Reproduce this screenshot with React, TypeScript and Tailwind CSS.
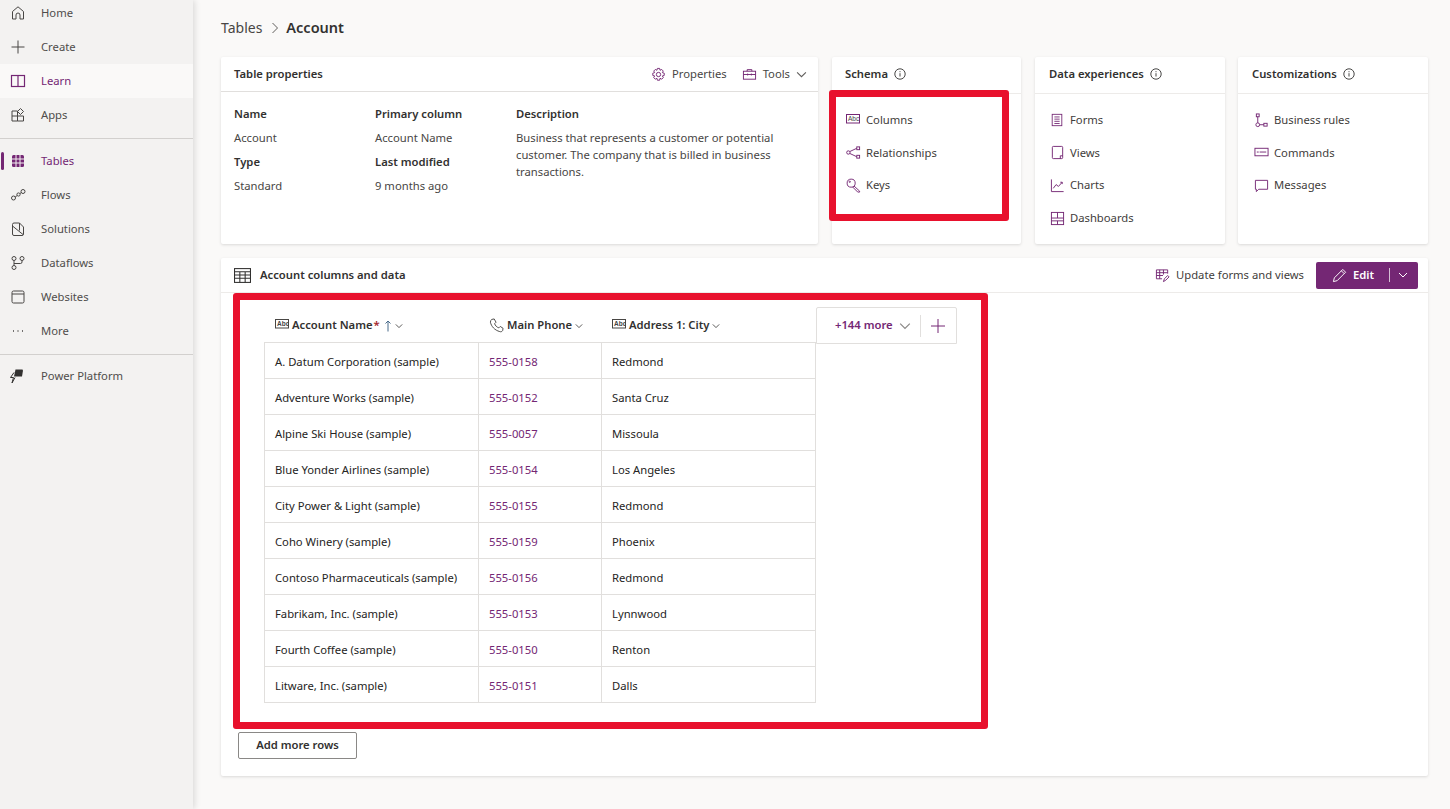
import type { ReactNode } from "react";

const Ic = ({ s = 16, c = "#605e5c", children }: { s?: number; c?: string; children: ReactNode }) => (
  <svg width={s} height={s} viewBox="0 0 16 16" fill="none" stroke={c} strokeWidth="1" className="shrink-0">
    {children}
  </svg>
);

const Chevron = ({ s = 10, c = "#605e5c" }: { s?: number; c?: string }) => (
  <svg width={s} height={s} viewBox="0 0 10 10" fill="none" stroke={c} strokeWidth="1" className="shrink-0">
    <path d="M1 3l4 4 4-4" />
  </svg>
);

const Info = () => (
  <svg width="12" height="12" viewBox="0 0 12 12" fill="none" stroke="#323130" strokeWidth="0.9" className="shrink-0">
    <circle cx="6" cy="6" r="5.2" />
    <path d="M6 5.2v3.3M6 3.2v1" />
  </svg>
);

const AbcIcon = ({ c = "#742774" }: { c?: string }) => (
  <svg width="14" height="10" viewBox="0 0 14 10" fill="none" className="mb-[3px] shrink-0">
    <rect x="0.5" y="0.5" width="13" height="8.5" stroke={c} />
    <text x="2" y="7" fontSize="6.5" fill="#444" stroke="none" fontFamily="Liberation Sans, sans-serif">Abc</text>
  </svg>
);

const navTop = [
  { label: "Home", icon: <path d="M2.5 14V6.5L8 1.8l5.500 4.700V14h-3.500V10a2 2 0 0 0-4 0v4z" /> },
  { label: "Create", icon: <path d="M8 1.5v13M1.5 8h13" /> },
  { label: "Learn", active: true, icon: <><rect x="1.5" y="2.5" width="13" height="11" strokeWidth="1.2" /><path d="M8 2.5v11" strokeWidth="1.2" /></> },
  { label: "Apps", icon: <><path d="M2 4h5.500v10H2zM2 9h11.500v5H7.500M7.500 4v5" /><path d="M10.500 1.500l3 3-3 3-3-3z" /></> },
];

const navBottom = [
  { label: "Flows", icon: <><circle cx="3.5" cy="11" r="2" /><circle cx="8.5" cy="7.500" r="1.600" /><circle cx="13" cy="4.500" r="2" /><path d="M5.200 10l2-1.500M10 6.500l1.300-.9" /></> },
  { label: "Solutions", icon: <><path d="M4 2h5.500l4 4v7a1.500 1.500 0 0 1-1.500 1.500H4A1.500 1.500 0 0 1 2.500 13V3.500A1.500 1.500 0 0 1 4 2z" /><path d="M2.500 5l10.500 8.500M9.500 2v7.500" /></> },
  { label: "Dataflows", icon: <><circle cx="4" cy="3.500" r="2" /><circle cx="12" cy="3.500" r="2" /><circle cx="4" cy="12.500" r="2" /><path d="M4 5.500v5M12 5.500v1.500a1.500 1.500 0 0 1-1.500 1.500H4" /></> },
  { label: "Websites", icon: <><rect x="2" y="2" width="12" height="12" rx="1.500" /><path d="M2 5h12" /></> },
  { label: "More", icon: <path d="M3 8h1M7.500 8h1M12 8h1" strokeWidth="1.400" /> },
];

const NavRow = ({ label, icon, active, selected }: { label: string; icon: ReactNode; active?: boolean; selected?: boolean }) => {
  const purple = active || selected;
  return (
    <div className={`relative flex h-[34px] items-center pl-[10px] ${active ? "bg-[#faf9f8]" : ""}`}>
      {selected && <div className="absolute left-[1px] top-[8px] h-[18px] w-[3px] rounded-full bg-[#742774]" />}
      <Ic c={purple ? "#742774" : "#484644"}>{icon}</Ic>
      <span className={`ml-[15px] text-[11.25px] ${purple ? "text-[#742774]" : "text-[#4f4d4b]"}`}>{label}</span>
    </div>
  );
};

const Sidebar = () => (
  <aside className="z-10 flex h-full w-[193px] shrink-0 flex-col bg-[#f3f2f1] shadow-[2px_0_6px_rgba(0,0,0,0.12)]">
    <div className="-mt-[4px]">
      {navTop.map((n) => (
        <NavRow key={n.label} {...n} />
      ))}
    </div>
    <div className="mb-[5px] mt-[6px] h-px bg-[#d2d0ce]" />
    <NavRow
      label="Tables"
      selected
      icon={
        <>
          <rect x="2" y="2" width="12" height="12" rx="1.500" fill="#742774" stroke="none" />
          <path d="M6 2v12M10 2v12M2 6h12M2 10h12" stroke="#f3f2f1" />
        </>
      }
    />
    {navBottom.map((n) => (
      <NavRow key={n.label} {...n} />
    ))}
    <div className="mb-[4px] mt-[6px] h-px bg-[#d2d0ce]" />
    <NavRow
      label="Power Platform"
      icon={
        <>
          <path d="M5.500 1.500h7l.5 1-1 6h-8z" fill="#323130" stroke="none" />
          <path d="M4 4.500L0.500 9.500h3L2 15l3-5.500" stroke="#323130" />
        </>
      }
    />
  </aside>
);

const Card = ({ title, items, width, headPad, itemPad }: { title: string; items: { label: string; icon: ReactNode }[]; width: string; headPad: string; itemPad: string }) => (
  <section className={`flex h-[187px] flex-col rounded-[2px] bg-white shadow-[0_1px_3px_rgba(0,0,0,0.13)] ${width}`}>
    <header className={`flex h-[37px] shrink-0 items-center gap-[6px] border-b border-[#edebe9] pb-[2px] text-[11.25px] font-semibold text-[#323130] ${headPad}`}>
      {title}
      <Info />
    </header>
    <ul className="flex flex-col pt-[10px]">
      {items.map((i) => (
        <li key={i.label} className={`flex h-[32.67px] items-center gap-[6px] text-[11.25px] text-[#3f3d3b] ${itemPad}`}>
          <span className="flex w-[14px] justify-center">{i.icon}</span>
          {i.label}
        </li>
      ))}
    </ul>
  </section>
);

const P = "#742774";

const schema = [
  { label: "Columns", icon: <AbcIcon /> },
  { label: "Relationships", icon: <Ic s={15} c={P}><circle cx="2.500" cy="8" r="1.800" /><rect x="11.500" y="2" width="3" height="3" /><rect x="11.500" y="11" width="3" height="3" /><path d="M4 7l7.500-3.500M4 9l7.500 3.500" /></Ic> },
  { label: "Keys", icon: <Ic s={15} c={P}><circle cx="5.500" cy="5.500" r="4.300" /><path d="M8.500 8.500l6 5.500v1h-2l-5.500-5.500" /><circle cx="4" cy="4" r=".7" /></Ic> },
];

const dataExp = [
  { label: "Forms", icon: <Ic s={14} c={P}><rect x="2.500" y="1.500" width="11" height="13" /><path d="M5 4.500h6M5 7h6M5 9.500h6M5 12h6" /></Ic> },
  { label: "Views", icon: <Ic s={15} c={P}><rect x="2.500" y="1.500" width="11" height="13" rx="1" /><path d="M11 14.500v-3h2.500" /></Ic> },
  { label: "Charts", icon: <Ic s={15} c={P}><path d="M1.500 1.500v13h13" /><path d="M3.500 11l3-4 2.500 2 4-4.500M11 4.500h2v2" /></Ic> },
  { label: "Dashboards", icon: <Ic s={15} c={P}><rect x="1.500" y="1.500" width="13" height="13" /><path d="M8 1.500v6M8 10.500v4M1.500 7.500h13M1.500 10.500h13" /></Ic> },
];

const custom = [
  { label: "Business rules", icon: <Ic s={15} c={P}><rect x="2.500" y="1" width="3" height="3" /><circle cx="4" cy="12.500" r="2" /><rect x="10.500" y="11" width="3.500" height="3" /><path d="M4 4v6.500M6 12.500h4.500" /></Ic> },
  { label: "Commands", icon: <Ic s={15} c={P}><rect x="1" y="3.500" width="14" height="8" /><path d="M3 7.500h2M6 7.500h7" /></Ic> },
  { label: "Messages", icon: <Ic s={15} c={P}><path d="M1.500 2.500h13v9.500H5L2.500 14.500v-2.500h-1z" /></Ic> },
];

const rows = [
  ["A. Datum Corporation (sample)", "555-0158", "Redmond"],
  ["Adventure Works (sample)", "555-0152", "Santa Cruz"],
  ["Alpine Ski House (sample)", "555-0057", "Missoula"],
  ["Blue Yonder Airlines (sample)", "555-0154", "Los Angeles"],
  ["City Power & Light (sample)", "555-0155", "Redmond"],
  ["Coho Winery (sample)", "555-0159", "Phoenix"],
  ["Contoso Pharmaceuticals (sample)", "555-0156", "Redmond"],
  ["Fabrikam, Inc. (sample)", "555-0153", "Lynnwood"],
  ["Fourth Coffee (sample)", "555-0150", "Renton"],
  ["Litware, Inc. (sample)", "555-0151", "Dalls"],
];

const TableProps = () => (
  <section className="h-[187px] w-[597px] shrink-0 rounded-[2px] bg-white shadow-[0_1px_3px_rgba(0,0,0,0.13)]">
    <header className="flex h-[35px] items-center justify-between border-b border-[#e1dfdd] pl-[13px] pr-[11px] text-[11.25px] text-[#323130]">
      <span className="font-semibold">Table properties</span>
      <div className="flex items-center text-[#484644]">
        <Ic s={15} c={P}><circle cx="8" cy="8" r="2.300" /><path d="M6.800 1.500h2.400l.4 2 1.800-.9 1.700 1.700-1 1.700 2 .6v2.400l-2 .5 1 1.800-1.700 1.700-1.800-1-.4 2.100H6.800l-.5-2.100-1.700 1L2.900 11.300l1-1.800-2-.5V6.600l2-.6-1-1.700 1.700-1.700 1.700.9z" /></Ic>
        <span className="ml-[6px]">Properties</span>
        <span className="ml-[15px]"><Ic s={15} c={P}><rect x="1.500" y="4.500" width="13" height="8.500" /><path d="M5.500 4.500V2.800h5v1.700M1.500 8h13M6 7v2M10 7v2" /></Ic></span>
        <span className="ml-[6px]">Tools</span>
        <span className="ml-[6px]"><Chevron s={11} /></span>
      </div>
    </header>
    <div className="grid grid-cols-[141px_141px_1fr] pl-[13px] pt-[10px] text-[11.25px] leading-[24px] text-[#484644]">
      <div>
        <div className="font-semibold text-[#323130]">Name</div>
        <div>Account</div>
        <div className="font-semibold text-[#323130]">Type</div>
        <div>Standard</div>
      </div>
      <div>
        <div className="font-semibold text-[#323130]">Primary column</div>
        <div>Account Name</div>
        <div className="font-semibold text-[#323130]">Last modified</div>
        <div>9 months ago</div>
      </div>
      <div>
        <div className="font-semibold text-[#323130]">Description</div>
        <p className="w-[270px] pt-[3px] leading-[17px]">
          Business that represents a customer or potential customer. The company that is billed in business transactions.
        </p>
      </div>
    </div>
  </section>
);

const ColHead = ({ icon, label, width, extra }: { icon: ReactNode; label: string; width: string; extra?: ReactNode }) => (
  <div className={`flex items-center pl-[11px] pt-[2px] text-[11.25px] font-semibold text-[#323130] ${width}`}>
    {icon}
    <span className="ml-[3px]">{label}</span>
    {extra}
    <span className="ml-[3px]"><Chevron s={8} c="#323130" /></span>
  </div>
);

const DataCard = () => (
  <section className="flex h-[518px] flex-col rounded-[2px] bg-white shadow-[0_1px_3px_rgba(0,0,0,0.13)]">
    <header className="flex h-[35px] shrink-0 items-center justify-between border-b border-[#edebe9] pl-[13px] pr-[10px]">
      <div className="flex items-center gap-[9px] text-[11.25px] font-semibold text-[#323130]">
        <Ic s={17} c="#323130"><rect x="0.500" y="1.500" width="15" height="13" /><path d="M0.500 4.500h15M0.500 7.500h15M0.500 10.500h15M5.500 4.500v10M10.500 4.500v10" /></Ic>
        Account columns and data
      </div>
      <div className="flex items-center">
        <Ic s={15} c={P}><path d="M1.500 2h12M1.500 2v9.500h6M1.500 5h12M1.500 8h7M5 2v9.500M9 2v5M13.500 2v4" /><path d="M9 14.500l1-3 3.500-3.500 1.500 1.500-3.500 3.500z" /></Ic>
        <span className="ml-[6px] text-[11.25px] text-[#3f3d3b]">Update forms and views</span>
        <div className="ml-[12px] flex h-[27px] w-[102px] items-center rounded-[2px] bg-[#742774] pl-[16px] text-white">
          <Ic s={15} c="#ffffff"><path d="M1.500 14.500l1-4L11.500 1.500l3 3-9 9z" /><path d="M10 3l3 3" /></Ic>
          <span className="ml-[6px] text-[11.25px] font-semibold">Edit</span>
          <span className="ml-[15px] h-[14px] w-px bg-white/70" />
          <span className="ml-[8px]"><Chevron s={10} c="#ffffff" /></span>
        </div>
      </div>
    </header>
    <div className="flex flex-1 flex-col pl-[17px] pt-[14px]">
      <div className="ml-[26px] flex items-start">
        <div className="w-[552px]">
          <div className="flex h-[35px] items-center">
            <ColHead
              width="w-[214px]"
              icon={<AbcIcon c="#484644" />}
              label="Account Name"
              extra={
                <>
                  <span className="ml-[1px] self-start text-[#a4262c]">*</span>
                  <svg width="8" height="12" viewBox="0 0 8 12" fill="none" stroke="#486a8a" strokeWidth="1" className="ml-[4px]"><path d="M4 11.500V1M1.500 3.500L4 1l2.500 2.500" /></svg>
                </>
              }
            />
            <ColHead
              width="w-[123px]"
              icon={<Ic s={15} c="#484644"><path d="M3 1.500l2.500-.5 2 3.500-1.500 1.500c.5 2 2.500 4 4.500 4.500l1.500-1.500 3 2-.5 2.500c-.5 1-2 1.500-3 1C6 13 2.500 9 1.500 4.500 1.500 3 2 2 3 1.500z" /></Ic>}
              label="Main Phone"
            />
            <ColHead width="flex-1" icon={<AbcIcon c="#484644" />} label="Address 1: City" />
          </div>
          <div className="border-l border-r border-t border-[#e1dfdd]">
            {rows.map((r) => (
              <div key={r[0]} className="flex h-[36px] border-b border-[#e1dfdd] text-[11.25px] text-[#252423]">
                <div className="flex w-[214px] items-center border-r border-[#e1dfdd] pl-[10px] pt-[3px]">{r[0]}</div>
                <div className="flex w-[123px] items-center border-r border-[#e1dfdd] pl-[10px] pt-[3px] text-[#742774]">{r[1]}</div>
                <div className="flex flex-1 items-center pl-[10px] pt-[3px]">{r[2]}</div>
              </div>
            ))}
          </div>
        </div>
        <div className="flex h-[37px] w-[141px] items-center rounded-t-[2px] border border-[#e1dfdd] pl-[18px] text-[11.25px] font-semibold text-[#742774]">
          +144 more
          <span className="ml-[6px]"><Chevron s={12} c="#8a8886" /></span>
          <span className="ml-[9px] h-[22px] w-px bg-[#e1dfdd]" />
          <span className="ml-[9px]"><Ic s={16} c={P}><path d="M8 1v14M1 8h14" /></Ic></span>
        </div>
      </div>
      <button className="mt-[29px] h-[27px] w-[119px] rounded-[2px] border border-[#8a8886] bg-white text-[11.25px] font-semibold text-[#323130]">
        Add more rows
      </button>
    </div>
  </section>
);

export default function App() {
  return (
    <div className="relative flex h-[809px] w-[1450px] overflow-hidden bg-[#faf9f8] font-['Noto_Sans',sans-serif]">
      <Sidebar />
      <main className="w-[1235px] pl-[28px] pt-[16px]">
        <div className="flex h-[23px] items-center text-[14.5px] text-[#484644]">
          <span className="text-[14px]">Tables</span>
          <svg width="8" height="12" viewBox="0 0 8 12" fill="none" stroke="#605e5c" className="ml-[9px] mr-[7px]"><path d="M1.500 1l5 5-5 5" /></svg>
          <span className="font-semibold text-[#323130]">Account</span>
        </div>
        <div className="mt-[18px] flex gap-[14px]">
          <TableProps />
          <Card title="Schema" items={schema} width="w-[189px]" headPad="pl-[13px]" itemPad="pl-[14px]" />
          <Card title="Data experiences" items={dataExp} width="w-[190px]" headPad="pl-[14px]" itemPad="pl-[15px]" />
          <div className="-ml-px">
            <Card title="Customizations" items={custom} width="w-[190px]" headPad="pl-[14px]" itemPad="pl-[16px]" />
          </div>
        </div>
        <div className="mt-[14px]">
          <DataCard />
        </div>
      </main>
      {/* red highlight boxes over the content */}
      <div className="absolute left-[829px] top-[90px] h-[131px] w-[180px] rounded-[3px] border-[7px] border-[#e8112d]" />
      <div className="absolute left-[233px] top-[293px] h-[436px] w-[755px] rounded-[3px] border-[7px] border-[#e8112d]" />
    </div>
  );
}
